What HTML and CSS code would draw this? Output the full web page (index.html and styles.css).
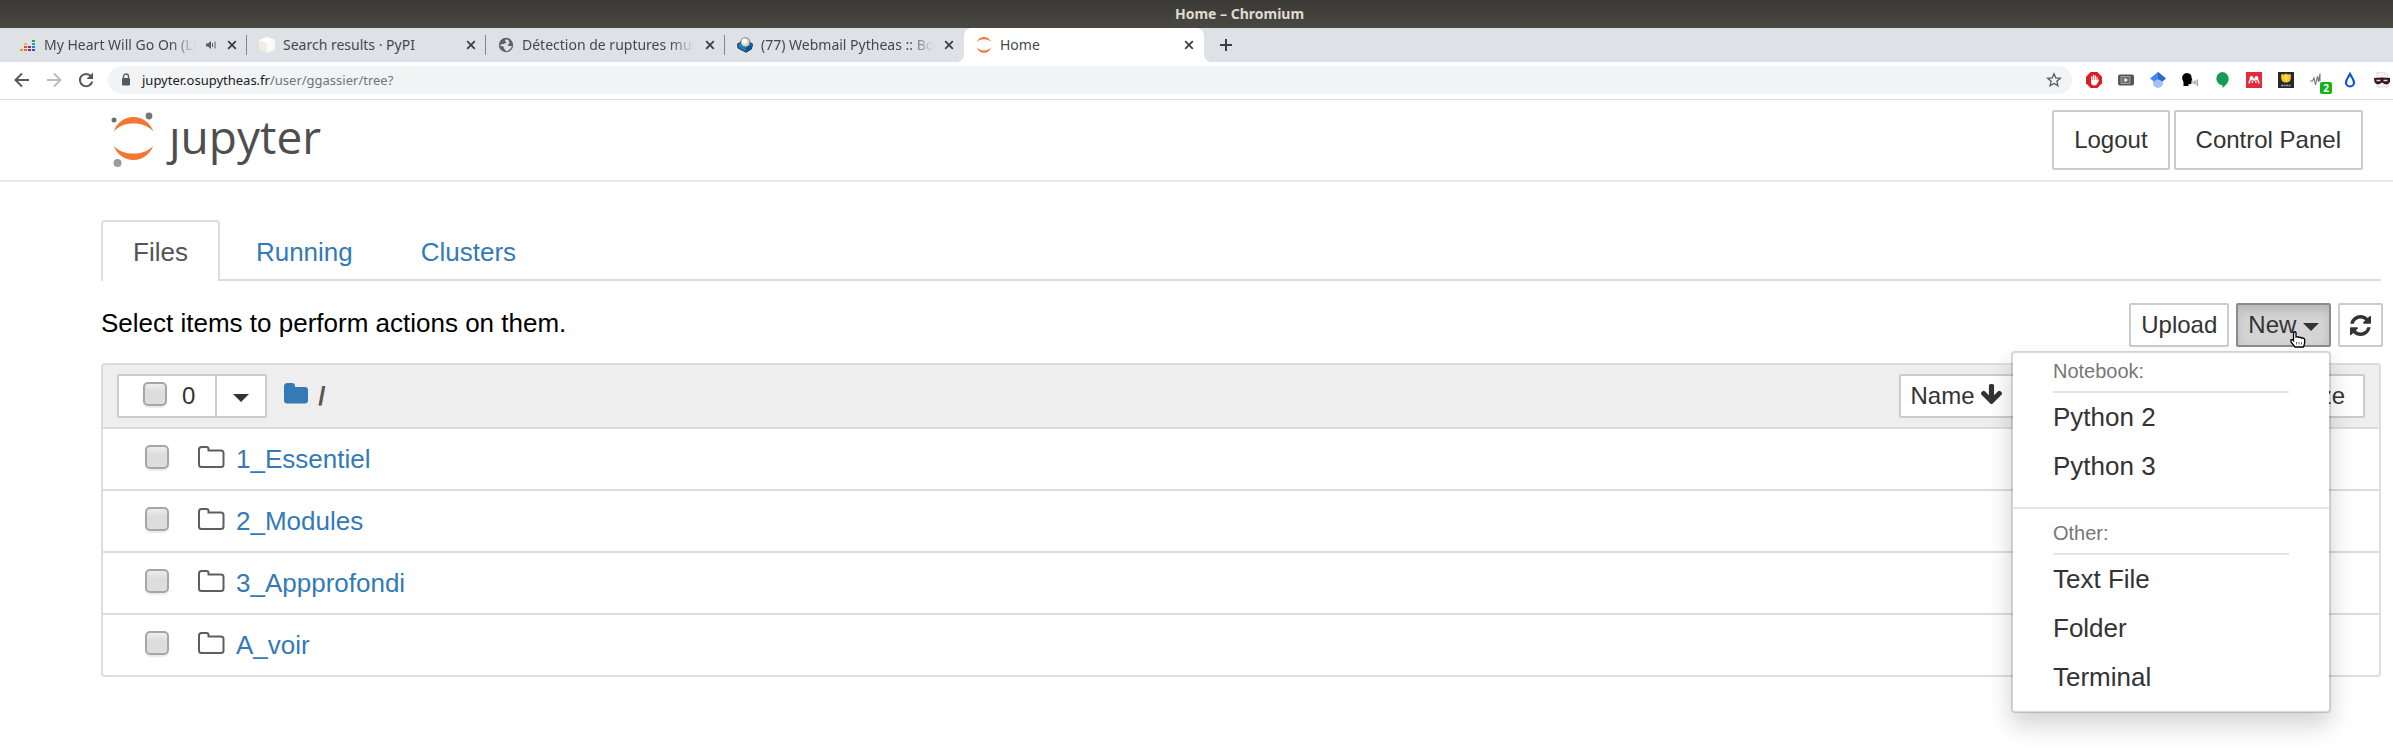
FILE: index.html
```html
<!DOCTYPE html>
<html lang="en">
<head>
<meta charset="utf-8">
<title>Home</title>
<link rel="stylesheet" href="styles.css">
</head>
<body>
<svg class="sprite" aria-hidden="true">
  <symbol id="close" viewBox="0 0 10 10"><path d="M1.2 1.2l7.6 7.6M8.8 1.2L1.2 8.8" fill="none" stroke="#3c4043" stroke-width="1.8"/></symbol>
  <symbol id="folder" viewBox="0 0 28 24"><path d="M2 4.500Q2 2 4.500 2H9.500Q11.500 2 11.500 4V5.500H24Q26.500 5.500 26.500 8V19.500Q26.500 22 24 22H4.500Q2 22 2 19.500Z" fill="none" stroke="#5e5e5e" stroke-width="2"/></symbol>
  <symbol id="planet" viewBox="0 0 40 44"><path d="M0 14.500C3 6 11 0 20 0s17 6 20 14.500C35 9 28 6.500 20 6.500S5 9 0 14.500zM0 29c3 8.500 11 14.500 20 14.500S37 37.500 40 29c-5 5.500-12 8-20 8S5 34.500 0 29z" fill="#f37733"/></symbol>
</svg>

<header class="window-title">Home – Chromium</header>

<nav class="tab-strip" aria-label="Browser tabs">
  <div class="tab">
    <svg class="favicon" viewBox="0 0 16 16"><path fill="#f6921e" d="M0 12h3v2H0z"/><path fill="#f6692d" d="M4 12h3v2H4z"/><path fill="#e8452c" d="M4 9h3v2H4z"/><path fill="#f9bd1b" d="M4 6h3v2H4z"/><path fill="#8a2b7d" d="M8 9h3v2H8zM8 12h3v2H8z"/><path fill="#2b50c8" d="M12 12h3v2h-3z"/><path fill="#2082cd" d="M12 9h3v2h-3z"/><path fill="#22a98a" d="M12 6h3v2h-3z"/><path fill="#20a94f" d="M12 3h3v2h-3z"/></svg>
    <span class="tab-name fade">My Heart Will Go On (Live)</span>
    <svg class="audio" viewBox="0 0 10 10"><path d="M0 3.500h2L5 1v8L2 6.500H0z" fill="#5a5e62"/><path d="M6.500 3v4M9 1.500v7" stroke="#5a5e62" fill="none"/></svg>
    <button class="tab-close" aria-label="Close tab"><svg><use href="#close"/></svg></button>
  </div>
  <div class="tab">
    <svg class="favicon" viewBox="0 0 16 16"><path d="M8 0l8 3v9.500L8 16 0 12.500V3z" fill="#efede4"/><path d="M8 0l8 3-8 3-8-3z" fill="#fff"/><path d="M8 6l8-3v9.500L8 16z" fill="#fbfaf6"/></svg>
    <span class="tab-name">Search results · PyPI</span>
    <button class="tab-close" aria-label="Close tab"><svg><use href="#close"/></svg></button>
  </div>
  <div class="tab">
    <svg class="favicon" viewBox="0 0 16 16"><circle cx="8" cy="8" r="7.200" fill="#5f6368"/><path d="M9 2.500c-2 0-2.500 1.500-1 2.500s-1 1.500-2.500 2L3 7.500 1.800 8c1 1.500 3 1 3.500 1.500S6 12 7 12.500s1 1 .5 1.700C11 14 13.500 11 13.800 9L11.500 9 9.500 8.500l1-1.500 1.500-1.500L10.500 5l.5-1.500z" fill="#dee1e6"/></svg>
    <span class="tab-name fade">Détection de ruptures multiples</span>
    <button class="tab-close" aria-label="Close tab"><svg><use href="#close"/></svg></button>
  </div>
  <div class="tab">
    <svg class="favicon" viewBox="0 0 16 16"><path d="M.5 7L4 5h8l3.500 2-1 5L9 15.300 1 11z" fill="#1a7fc4" stroke="#123" stroke-width=".9"/><path d="M9 15l-.5-4L15 7.500l-.7 4.200z" fill="#0b568c"/><circle cx="8.300" cy="5.300" r="4.600" fill="#d8d8d5" stroke="#555" stroke-width=".7"/><circle cx="7.500" cy="4" r="2.600" fill="#fff"/></svg>
    <span class="tab-name fade">(77) Webmail Pytheas :: Boîte</span>
    <button class="tab-close" aria-label="Close tab"><svg><use href="#close"/></svg></button>
  </div>
  <div class="tab active">
    <svg class="favicon"><use href="#planet"/></svg>
    <span class="tab-name">Home</span>
    <button class="tab-close" aria-label="Close tab"><svg><use href="#close"/></svg></button>
  </div>
  <button class="new-tab" aria-label="New tab"><svg viewBox="0 0 12 12"><path d="M6 0v12M0 6h12" stroke="#3c4043" stroke-width="2"/></svg></button>
</nav>

<div class="toolbar">
  <button aria-label="Back"><svg viewBox="0 0 16 16"><path d="M15 8H2M8 1.500L1.500 8 8 14.500" fill="none" stroke="#55585c" stroke-width="2"/></svg></button>
  <button aria-label="Forward"><svg viewBox="0 0 16 16"><path d="M1 8h13M8 1.500L14.500 8 8 14.500" fill="none" stroke="#babcbe" stroke-width="2"/></svg></button>
  <button aria-label="Reload"><svg viewBox="0 0 16 16"><path d="M13 4.200A6.200 6.200 0 1 0 14.200 9.500" fill="none" stroke="#55585c" stroke-width="2"/><path d="M15 .5v6.500H8.500z" fill="#55585c"/></svg></button>
  <div class="omnibox">
    <svg class="lock" viewBox="0 0 10 14"><path d="M2.500 6V3.500a2.500 2.500 0 0 1 5 0V6" fill="none" stroke="#5f6368" stroke-width="1.400"/><rect x="1" y="5" width="8" height="7.500" rx="1" fill="#55585c"/></svg>
    <div class="address" role="textbox" contenteditable="true" spellcheck="false" aria-label="Address"><span class="host">jupyter.osupytheas.fr</span>/user/ggassier/tree?</div>
    <svg class="star" viewBox="0 0 16 16"><path d="M8 1.800l1.800 4.100 4.500.4-3.400 3 1 4.400L8 11.400l-3.900 2.300 1-4.400-3.400-3 4.500-.4z" fill="none" stroke="#55585c" stroke-width="1.300"/></svg>
  </div>
  <div class="extensions">
    <svg viewBox="0 0 16 16"><path d="M4.700 0h6.600L16 4.700v6.600L11.300 16H4.700L0 11.300V4.700z" fill="#e01b24"/><path d="M5.700 9V5M7.500 8V3.500M9.300 8V4M11 9V5.500" stroke="#fff" stroke-width="1.300" stroke-linecap="round"/><path d="M5 8h6.700l.8-.5q.8 0 .5.800L11 12q-1 1.500-2.700 1.500Q5 13.500 5 10z" fill="#fff"/></svg>
    <svg viewBox="0 0 16 16"><rect y="2.500" width="16" height="11" rx="2" fill="#555"/><rect x="3" y="4.500" width="9" height="7" fill="#707070" stroke="#aaa" stroke-width=".8"/><path d="M6.500 6v4L10 8z" fill="#fff"/></svg>
    <svg viewBox="0 0 16 16"><circle cx="8" cy="11" r="5" fill="#a0c3ff"/><path d="M8 0L0 6.500 4 9.500q4-4 8 0l4-3z" fill="#4285f4"/><path d="M8 0l8 6.500-4 3Q10 7 8 7z" fill="#356ac3"/></svg>
    <svg viewBox="0 0 16 16"><path d="M1.500 14v-4Q-1 6 1 3q2.500-3 6-1.500Q10 2.500 9.500 6l1 2.500H9.500v3q-1 1-3 .5V14z"/><path d="M11 9.500v2M13 8.500v4M15.200 7.500v6.500" stroke="#777" fill="none"/></svg>
    <svg viewBox="0 0 16 16"><path d="M8 0a6.700 6.700 0 0 1 6.700 6.700C14.700 11 11 14 8.500 16v-2.700A6.700 6.700 0 0 1 8 0z" fill="#179c57"/></svg>
    <svg viewBox="0 0 16 16"><rect width="16" height="16" fill="#e42a3c"/><circle cx="5.500" cy="6" r="1.900" fill="#fff"/><circle cx="10.500" cy="6" r="1.900" fill="#fff"/><circle cx="8" cy="7.500" r="1.300" fill="#fff"/><path d="M3.200 11.500Q3 9 5 6.500M12.800 11.500Q13 9 11 6.500M6.200 11V8.500M9.800 11V8.500" stroke="#fff" stroke-width="1.300" fill="none"/></svg>
    <svg viewBox="0 0 16 16"><rect width="16" height="16" fill="#252836"/><path d="M3.500 2L6 2.500 8 1.500l2 1 2.500-.5Q13.500 6 12 9q-4 3-8 0-1.500-3-.5-7z" fill="#ffc818"/><path d="M8 2.500l2 3-2 4-2-4z" fill="#ffdf52"/><path d="M3 13.500h10" stroke="#a0a2a8" stroke-width="1.400" stroke-dasharray="2 .5"/></svg>
    <span class="with-badge"><svg viewBox="0 0 16 16"><path d="M0 9h2.500L4 6l1.500 7L7.500 4l1 6L10 1.500V9" fill="none" stroke="#777" stroke-width="1.100"/></svg><b class="badge">2</b></span>
    <svg viewBox="0 0 16 16"><path d="M8 2C6.500 5 4 7.500 4 10.500a4 4 0 0 0 8 0C12 7.500 9.500 5 8 2z" fill="#fff" stroke="#0d55cf" stroke-width="2.200"/></svg>
    <svg viewBox="0 0 16 16"><path d="M3 0h7l4 4v11H3z" fill="#f5f5f5" stroke="#c8c8c8" stroke-width=".7"/><path d="M0 6q8-1 16 0v4q-2 3.500-5.500 2L8 10.500 5.500 12Q2 13 .5 10z" fill="#351517"/><path d="M2.500 8.500h4M9.500 8.500h4" stroke="#ddd" stroke-width="1.500"/></svg>
  </div>
</div>

<header class="site-header">
  <a class="logo" href="#" aria-label="Jupyter home">
    <svg viewBox="0 0 44 56"><circle cx="3" cy="8" r="2.500" fill="#6d6e71"/><circle cx="38" cy="4" r="3.400" fill="#767677"/><circle cx="6.500" cy="51" r="4" fill="#9b9b9b"/><use href="#planet" x="2.500" y="5" width="40" height="43.500"/></svg>
    <span>ȷupyter</span>
  </a>
  <div class="account">
    <button class="btn btn-large">Logout</button>
    <button class="btn btn-large">Control Panel</button>
  </div>
</header>

<main class="content">
  <nav class="page-tabs">
    <a class="page-tab current" href="#">Files</a>
    <a class="page-tab" href="#">Running</a>
    <a class="page-tab" href="#">Clusters</a>
  </nav>

  <div class="actions">
    <p>Select items to perform actions on them.</p>
    <div class="action-buttons">
      <button class="btn">Upload</button>
      <div class="new-wrap">
        <button class="btn pressed" aria-expanded="true">New <i class="caret"></i></button>
        <div class="menu">
          <h2>Notebook:</h2>
          <a href="#">Python 2</a>
          <a href="#">Python 3</a>
          <hr>
          <h2>Other:</h2>
          <a href="#">Text File</a>
          <a href="#">Folder</a>
          <a href="#">Terminal</a>
        </div>
        <svg class="pointer" viewBox="0 0 16 17"><path d="M3.500 1.500q1.500-1.500 2.500 0V6q2-.7 2.800.5 2-.7 2.700.7 2.500-.7 3.200 1.300V12l-1.200 4H5L1 11V8.800q1.500-.5 2.500.7z" fill="#fff" stroke="#000" stroke-width="1.300"/><path d="M6.500 11v2.500M9 11v2.500M11.500 11v2.500" stroke="#555" stroke-width=".9"/></svg>
      </div>
      <button class="btn refresh" aria-label="Refresh"><svg viewBox="0 0 1536 1536"><path fill="#333" d="M1511 928q0 5-1 7-64 268-268 434.500T764 1536q-146 0-282.500-55T238 1324l-129 129q-19 19-45 19t-45-19-19-45V960q0-26 19-45t45-19h448q26 0 45 19t19 45-19 45l-137 137q71 66 161 102t187 36q134 0 250-65t186-179q11-17 53-117 8-23 30-23h192q13 0 22.500 9.500t9.500 22.500zm25-800v448q0 26-19 45t-45 19h-448q-26 0-45-19t-19-45 19-45l138-138Q969 256 768 256q-134 0-250 65T332 500q-11 17-53 117-8 23-30 23H50q-13 0-22.500-9.500T18 608v-7q65-268 270-434.500T768 0q146 0 284 55.500T1297 212l130-129q19-19 45-19t45 19 19 45z"/></svg></button>
    </div>
  </div>

  <section class="files">
    <div class="files-head">
      <div class="select-group">
        <label class="select-all"><input type="checkbox"><span>0</span></label>
        <button class="select-menu" aria-label="Selection options"><i class="caret"></i></button>
      </div>
      <a class="root" href="#" aria-label="Root folder"><svg viewBox="0 0 24 21"><path d="M0 3.500Q0 0 3.500 0H8q3 0 3 3v1h10q3 0 3 3v10.500q0 3-3 3H3q-3 0-3-3z" fill="#337ab7"/></svg></a>
      <b class="slash">/</b>
      <div class="sorts">
        <button class="btn sort-name">Name <svg viewBox="118 128 1557 1483"><path fill="#333" d="M1675 832q0 51-37 90l-651 652q-39 37-91 37-53 0-90-37l-651-652q-38-36-38-90 0-53 38-91l74-75q39-37 91-37 53 0 90 37l294 294v-704q0-52 38-90t90-38h128q52 0 90 38t38 90v704l294-294q37-37 90-37 52 0 91 37l75 75q37 39 37 91z"/></svg></button>
        <button class="btn">Last Modified</button>
        <button class="btn">File size</button>
      </div>
    </div>
    <ul class="rows">
      <li><input type="checkbox" aria-label="Select 1_Essentiel"><svg><use href="#folder"/></svg><a href="#">1_Essentiel</a></li>
      <li><input type="checkbox" aria-label="Select 2_Modules"><svg><use href="#folder"/></svg><a href="#">2_Modules</a></li>
      <li><input type="checkbox" aria-label="Select 3_Appprofondi"><svg><use href="#folder"/></svg><a href="#">3_Appprofondi</a></li>
      <li><input type="checkbox" aria-label="Select A_voir"><svg><use href="#folder"/></svg><a href="#">A_voir</a></li>
    </ul>
  </section>
</main>
</body>
</html>
```
FILE: styles.css
```css
* { box-sizing: border-box; }

body {
  margin: 0;
  background: #fff;
  color: #000;
  font-family: "Liberation Sans", Arial, sans-serif;
  font-size: 26px;
  line-height: 36px;
}

a { color: #337ab7; text-decoration: none; }
button { font: inherit; color: inherit; }
svg { display: block; flex: none; }
.sprite { position: absolute; width: 0; height: 0; }

/* Browser frame */
.window-title {
  height: 28px;
  background: linear-gradient(#3a3935, #4a4843);
  color: #dfdbd2;
  font: bold 14px/28px "Noto Sans", sans-serif;
  text-align: center;
  padding-left: 86px;
}

.tab-strip {
  display: flex;
  height: 34px;
  padding-left: 8px;
  background: #dee1e6;
  font: 14px/34px "Noto Sans", sans-serif;
  color: #45494d;
}

.tab {
  display: flex;
  align-items: center;
  width: 239px;
  padding: 0 7px 0 12px;
  background: linear-gradient(#83878c, #83878c) right center / 1px 20px no-repeat;
}

.tab:nth-child(4) { background: none; }

.tab.active {
  position: relative;
  width: 240px;
  border-radius: 8px 8px 0 0;
  background: #fff;
}

.tab.active::before,
.tab.active::after {
  content: "";
  position: absolute;
  bottom: 0;
  width: 8px;
  height: 8px;
}

.tab.active::before { right: 100%; background: radial-gradient(circle at 0 0, #dee1e6 8px, #fff 8px); }
.tab.active::after { left: 100%; background: radial-gradient(circle at 100% 0, #dee1e6 8px, #fff 8px); }

.favicon { width: 16px; height: 16px; margin-right: 8px; }

.tab-name {
  flex: 1;
  min-width: 0;
  overflow: hidden;
  white-space: nowrap;
}

.fade {
  mask-image: linear-gradient(to right, #000 calc(100% - 24px), transparent);
}

.audio { width: 10px; height: 10px; margin-left: 10px; }

.tab-close {
  display: grid;
  place-items: center;
  width: 16px;
  height: 16px;
  margin-left: 8px;
  padding: 0;
  border: 0;
  background: none;
}

.tab-close svg { width: 10px; height: 10px; }

.new-tab {
  width: 44px;
  display: grid;
  place-items: center;
  padding: 0;
  border: 0;
  background: none;
}

.new-tab svg { width: 12px; height: 12px; }

.toolbar {
  display: flex;
  align-items: center;
  height: 38px;
  padding: 0 3px 2px 14px;
  border-bottom: 1px solid #dadce0;
}

.toolbar > button {
  width: 16px;
  height: 16px;
  margin-right: 16px;
  padding: 0;
  border: 0;
  background: none;
}

.toolbar > button svg { width: 16px; height: 16px; }

.omnibox {
  flex: 1;
  display: flex;
  align-items: center;
  height: 28px;
  margin-left: -2px;
  padding: 0 10px 0 13px;
  border-radius: 14px;
  background: #f1f3f4;
}

.lock { width: 10px; height: 14px; }

.address {
  flex: 1;
  margin-left: 11px;
  color: #70757a;
  font: 13px/28px "Noto Sans", sans-serif;
}

.host { color: #202124; }
.star { width: 16px; height: 16px; }

.extensions { display: flex; gap: 16px; margin-left: 14px; }
.extensions svg { width: 16px; height: 16px; }
.with-badge { position: relative; }

.badge {
  position: absolute;
  left: 10px;
  top: 10px;
  width: 12px;
  height: 12px;
  border-radius: 2px;
  background: #14b414;
  color: #fff;
  font: bold 10px/12px "Noto Sans", sans-serif;
  text-align: center;
}

/* Page header */
.site-header {
  display: flex;
  justify-content: space-between;
  align-items: center;
  padding: 10px 30px 10px 111px;
  border-bottom: 2px solid #e7e7e7;
}

.logo { display: flex; align-items: center; gap: 14px; color: #4e4e4e; }
.logo svg { width: 44px; height: 56px; }
.logo span { font: 46px/52px "Open Sans", sans-serif; padding-bottom: 8px; }

.account { display: flex; gap: 4px; }

.btn {
  height: 44px;
  padding: 0 10px;
  border: 2px solid #ccc;
  border-radius: 2px;
  background: #fff;
  color: #333;
  font-size: 24px;
  line-height: 34px;
  white-space: nowrap;
}

.btn-large { height: 60px; padding: 0 20px; }

.caret {
  display: inline-block;
  border: 8px solid transparent;
  border-top-color: #333;
  border-bottom: 0;
  vertical-align: middle;
}

/* Page body */
.content { padding: 38px 12px 70px 101px; }

.page-tabs {
  display: flex;
  gap: 4px;
  border-bottom: 2px solid #ddd;
}

.page-tab {
  margin-bottom: -2px;
  padding: 12px 30px 11px;
  border: 2px solid transparent;
  border-bottom: 0;
  border-radius: 4px 4px 0 0;
}

.page-tab.current {
  border-color: #ddd;
  background: #fff;
  color: #555;
}

.actions {
  display: flex;
  justify-content: space-between;
  margin: 22px -2px 16px 0;
}

.actions p { margin: 2px 0 0; }
.action-buttons { display: flex; gap: 7px; }
.new-wrap { position: relative; }

.pressed {
  border-color: #8c8c8c;
  background: #d4d4d4;
  box-shadow: inset 0 6px 10px rgba(0, 0, 0, .125);
}

.refresh svg { width: 21px; height: 21px; }

.pointer {
  position: absolute;
  z-index: 3;
  left: 54px;
  top: 28px;
  width: 16px;
  height: 17px;
}

.menu {
  position: absolute;
  z-index: 2;
  top: calc(100% + 4px);
  right: 0;
  width: 320px;
  padding-bottom: 9px;
  border: 2px solid rgba(0, 0, 0, .15);
  border-radius: 4px;
  background: #fff;
  background-clip: padding-box;
  box-shadow: 0 12px 24px rgba(0, 0, 0, .175);
}

.menu h2 {
  height: 40px;
  margin: 0 40px;
  border-bottom: 2px solid #e5e5e5;
  color: #777;
  font-size: 20px;
  font-weight: normal;
}

.menu a {
  display: block;
  padding: 6px 40px 7px;
  color: #333;
}

.menu hr {
  height: 2px;
  margin: 16px 0 6px;
  border: 0;
  background: #e5e5e5;
}

.files {
  border: 2px solid #ddd;
  border-radius: 4px;
}

.files-head {
  display: flex;
  align-items: center;
  height: 62px;
  padding: 0 14px;
  background: #eee;
}

.select-group {
  display: flex;
  height: 44px;
  border: 2px solid #ccc;
  border-radius: 2px;
  background: #fff;
  color: #333;
  font-size: 24px;
}

.select-all {
  display: flex;
  align-items: center;
  gap: 15px;
  padding: 0 20px 0 24px;
}

.select-menu {
  width: 50px;
  padding: 0;
  border: 0;
  border-left: 2px solid #ccc;
  background: none;
}

input[type="checkbox"] {
  appearance: none;
  flex: none;
  width: 24px;
  height: 24px;
  margin: 0;
  border: 2px solid #a6a6a6;
  border-radius: 5px;
  background: linear-gradient(#ededed, #dcdcdc 40%, #dedede);
  box-shadow: 0 2px 1px rgba(0, 0, 0, .08);
}

.select-all input { margin-bottom: 4px; }

.root { margin: 0 10px 6px 17px; }
.root svg { width: 24px; height: 21px; }
.slash { color: #555; }

.sorts { display: flex; margin-left: auto; }
.sorts .btn { padding-right: 18px; }
.sorts .sort-name { padding-right: 66px; }
.sorts svg { display: inline-block; width: 21px; height: 20px; }

.rows { margin: 0; padding: 0; list-style: none; }

.rows li {
  display: flex;
  align-items: center;
  height: 62px;
  padding-left: 42px;
  border-top: 2px solid #ddd;
}

.rows svg { width: 28px; height: 24px; margin: 0 11px 5px 28px; }
.rows input { margin-bottom: 4px; }
```
